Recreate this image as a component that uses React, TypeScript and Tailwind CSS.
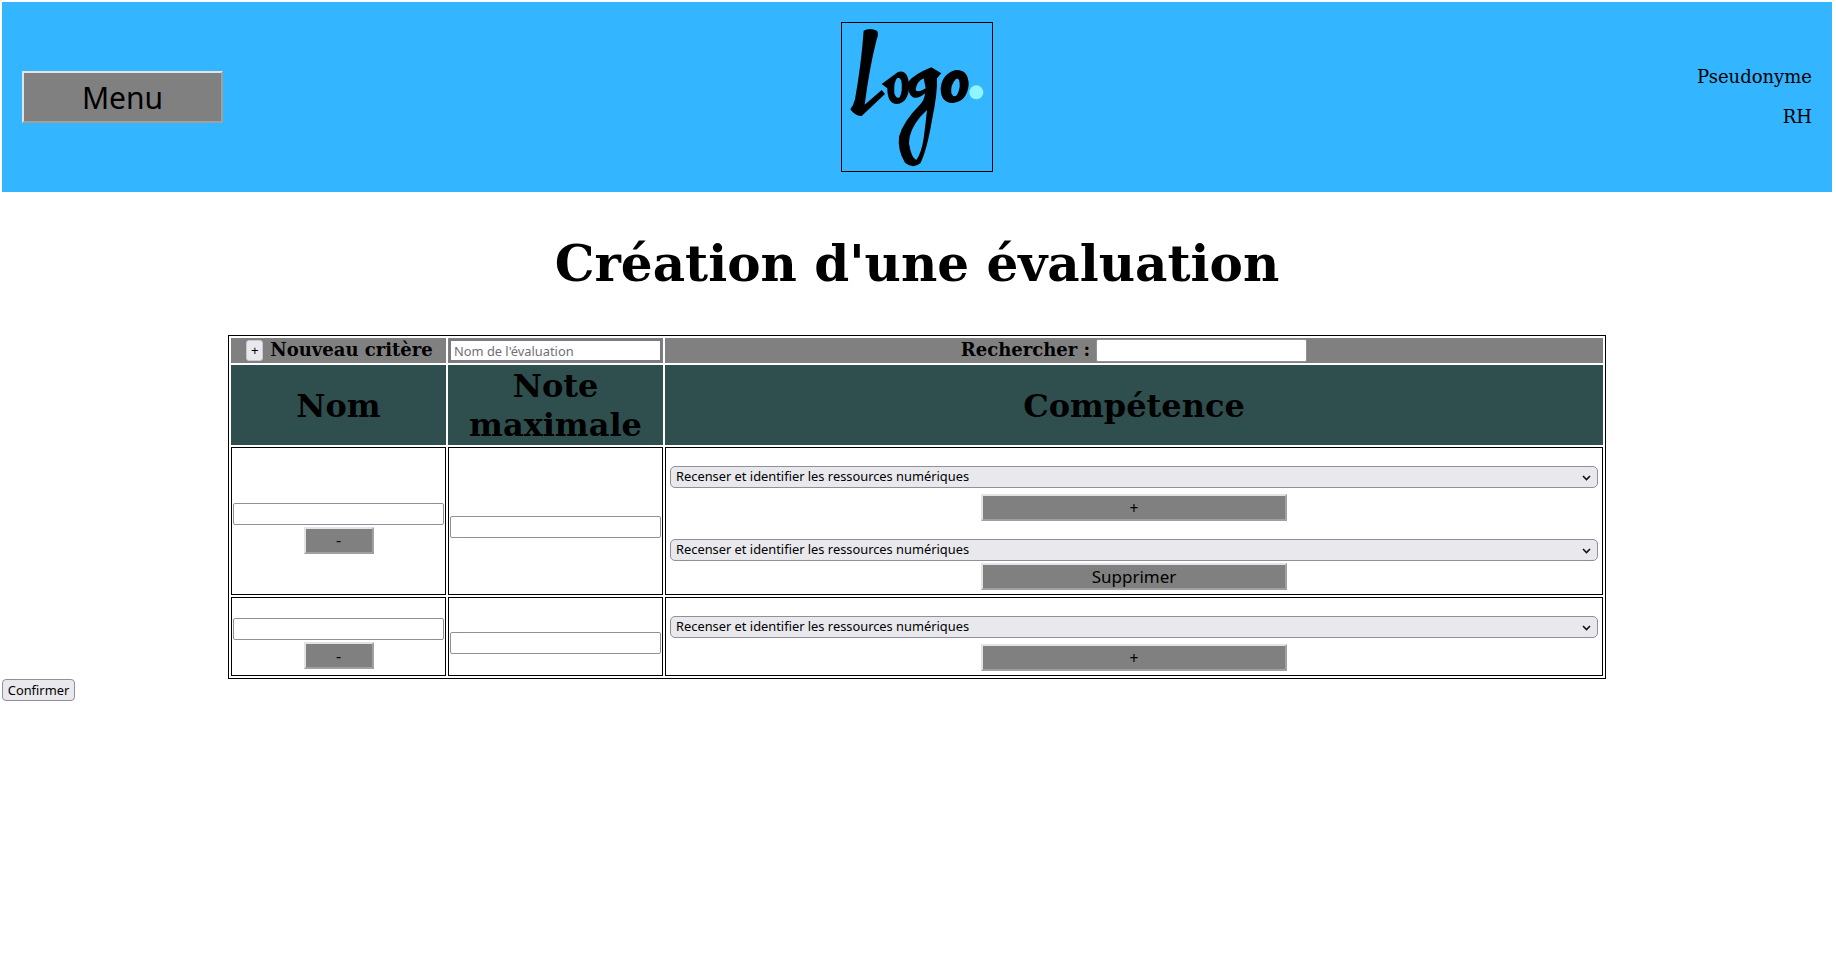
const serif = "font-['DejaVu_Serif',serif]";
const ui = "font-['Noto_Sans',sans-serif]";

const outset = "border-2 border-t-[#e3e3e3] border-l-[#e3e3e3] border-r-[#a0a0a0] border-b-[#a0a0a0]";

const GrayButton = ({ children, className }: { children: any; className: string }) => (
  <button className={`${outset} bg-[#808080] text-black leading-none ${ui} ${className}`}>
    {children}
  </button>
);

const Field = ({ className }: { className?: string }) => (
  <input
    type="text"
    className={`block w-[211px] h-[22px] bg-white border border-[#8f8f9d] rounded-[2px] outline-none ${className || ""}`}
  />
);

const Competence = ({ className }: { className?: string }) => (
  <div className={`relative w-full h-[22px] ${className || ""}`}>
    <select className={`block w-full h-[22px] appearance-none bg-[#e9e9ed] border border-[#8f8f9d] rounded-[5px] pl-[5px] text-[12.85px] text-black ${ui}`}>
      <option>Recenser et identifier les ressources numériques</option>
    </select>
    <svg className="absolute right-[7px] top-[9px] pointer-events-none" width="9" height="6" viewBox="0 0 9 6">
      <path d="M1 1 L4.5 4.5 L8 1" fill="none" stroke="#111" strokeWidth="1.6" />
    </svg>
  </div>
);

const Logo = () => (
  <div className="w-[152px] h-[150px] border border-black">
    <svg width="150" height="148" viewBox="67 39 450 444">
      <path
        d="M132 62 Q150 52 172 62 Q178 70 170 92 Q150 170 135 284 L186 240 L196 252 L126 318 Q108 320 92 298 Q102 285 106 268 Q125 160 132 62Z"
        fill="#000"
      />
      <path
        d="M186 222 L235 186 Q265 178 268 225 Q268 278 232 282 Q203 282 203 235 L186 222Z M232 205 Q222 215 224 250 Q230 268 240 262 Q250 240 245 212 Q240 200 232 205Z"
        fill="#000"
        fillRule="evenodd"
      />
      <path
        d="M266 215 Q285 192 335 172 L365 190 L352 205 Q354 250 337 330 Q322 420 302 460 Q280 478 256 458 Q233 420 238 380 Q250 335 300 285 Q315 270 316 250 Q295 268 280 262 Q260 248 266 215Z M312 205 Q290 215 288 240 Q295 250 318 235 Z M302 320 Q268 360 268 400 Q275 445 290 450 Q305 430 312 385 Q318 340 322 300 Z"
        fill="#000"
        fillRule="evenodd"
      />
      <path
        d="M408 180 Q447 178 447 225 Q442 274 400 279 Q363 280 363 235 Q368 190 408 180Z M408 208 Q392 225 395 250 Q402 265 412 255 Q425 230 418 210 Q414 202 408 208Z"
        fill="#000"
        fillRule="evenodd"
      />
      <circle cx="470" cy="247" r="21" fill="#8ff5ff" />
    </svg>
  </div>
);

function App() {
  return (
    <div className={`min-h-[959px] bg-white pl-[2px] pt-[2px] pr-[4px] text-black ${serif}`}>
      <header className="h-[190px] bg-[#33b5ff] flex items-center justify-between pl-[20px] pr-[20px]">
        <button className={`${outset} w-[201px] h-[52px] bg-[#808080] text-[30px] leading-none pt-[2px] text-black ${ui}`}>
          Menu
        </button>
        <Logo />
        <div className="w-[201px] text-right text-[18px] leading-[40px] -mt-[1px]">
          <p>Pseudonyme</p>
          <p>RH</p>
        </div>
      </header>

      <h1 className="mt-[42px] mb-[41px] text-center text-[50px] leading-[60px] font-bold">
        Création d'une évaluation
      </h1>

      <table className="ml-[226px] w-[1378px] table-fixed border border-black border-separate border-spacing-[2px]">
        <colgroup>
          <col className="w-[215px]" />
          <col className="w-[215px]" />
          <col />
        </colgroup>
        <thead>
          <tr className="h-[25px]">
            <th className="p-0 bg-[#808080] text-[18px] leading-[21px] font-bold">
              <span className="flex items-center justify-center gap-[7px] pl-[2px]">
                <button className={`w-[17px] h-[21px] bg-[#e9e9ed] border border-[#c8c8d0] rounded-[3px] text-[13.33px] leading-none font-normal ${ui}`}>
                  +
                </button>
                <span className="-mt-[2px]">Nouveau critère</span>
              </span>
            </th>
            <th className="p-0 bg-[#808080]">
              <input
                type="text"
                placeholder="Nom de l'évaluation"
                className={`block mx-auto w-[213px] h-[23px] bg-white border-2 border-[#7a7a85] pl-[3px] text-[12.85px] font-normal placeholder:text-[#6f6f78] outline-none ${ui}`}
              />
            </th>
            <th className="p-0 bg-[#808080] text-[18px] leading-[21px] font-bold">
              <span className="flex items-center justify-center gap-[6px]">
                <span className="-mt-[2px]">Rechercher :</span>
                <input type="text" className="block w-[211px] h-[23px] bg-white border border-[#8f8f9d] rounded-[2px] outline-none" />
              </span>
            </th>
          </tr>
          <tr className="h-[80px]">
            <th className="p-0 pt-[3px] bg-[#2f4f4f] text-[32px] leading-[39px] font-bold">Nom</th>
            <th className="p-0 pt-[1px] bg-[#2f4f4f] text-[32px] leading-[39px] font-bold">Note maximale</th>
            <th className="p-0 pt-[3px] bg-[#2f4f4f] text-[32px] leading-[39px] font-bold">Compétence</th>
          </tr>
        </thead>
        <tbody>
          <tr className="h-[148px]">
            <td className="p-[1px] border border-black">
              <div className="flex flex-col items-center pt-[14px]">
                <Field />
                <GrayButton className="mt-[2px] w-[70px] h-[27px] text-[16px]">-</GrayButton>
              </div>
            </td>
            <td className="p-[1px] border border-black">
              <div className="flex flex-col items-center pt-[12px]">
                <Field />
              </div>
            </td>
            <td className="px-[4px] py-0 border border-black">
              <div className="flex flex-col items-center pt-[14px]">
                <Competence />
                <GrayButton className="mt-[6px] w-[306px] h-[27px] pt-[3px] text-[15.5px]">+</GrayButton>
                <Competence className="mt-[18px]" />
                <GrayButton className="mt-[2px] w-[306px] h-[27px] text-[17px]">Supprimer</GrayButton>
              </div>
            </td>
          </tr>
          <tr className="h-[79px]">
            <td className="p-[1px] border border-black">
              <div className="flex flex-col items-center pt-[14px]">
                <Field />
                <GrayButton className="mt-[2px] w-[70px] h-[27px] text-[16px]">-</GrayButton>
              </div>
            </td>
            <td className="p-[1px] border border-black">
              <div className="flex flex-col items-center pt-[12px]">
                <Field />
              </div>
            </td>
            <td className="px-[4px] py-0 border border-black">
              <div className="flex flex-col items-center pt-[14px]">
                <Competence />
                <GrayButton className="mt-[6px] w-[306px] h-[27px] pt-[3px] text-[15.5px]">+</GrayButton>
              </div>
            </td>
          </tr>
        </tbody>
      </table>

      <button className={`block w-[73px] h-[22px] bg-[#e9e9ed] border border-[#8f8f9d] rounded-[4px] text-[12.85px] leading-none text-black ${ui}`}>
        Confirmer
      </button>
    </div>
  );
}

export default App;
